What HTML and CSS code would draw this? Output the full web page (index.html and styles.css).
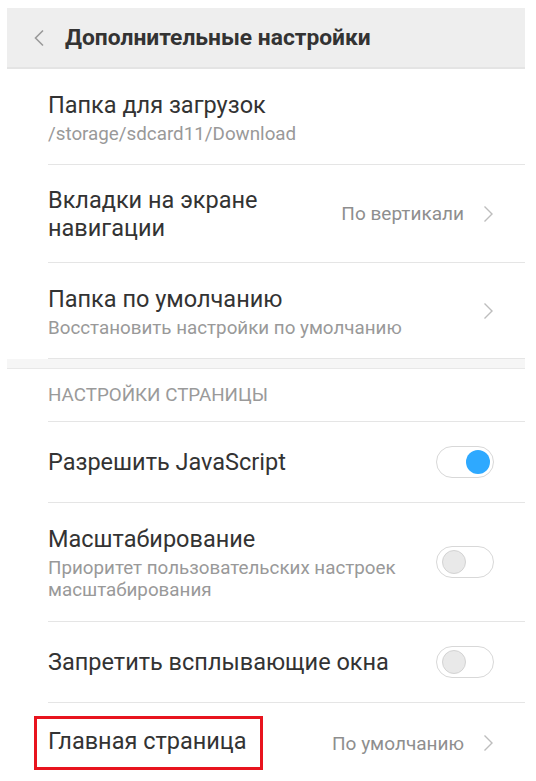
FILE: index.html
```html
<!DOCTYPE html>
<html lang="ru">
<head>
<meta charset="utf-8">
<title>Дополнительные настройки</title>
<link rel="stylesheet" href="styles.css">
</head>
<body>
<div class="screen">
  <header class="topbar">
    <svg class="back" width="12" height="18" viewBox="0 0 12 18"><path d="M10 1.5 L2.5 9 L10 16.5" fill="none" stroke="#9a9a9a" stroke-width="1.6"/></svg>
    <h1 class="topbar-title">Дополнительные настройки</h1>
  </header>

  <div class="row row-tall">
    <div class="text">
      <div class="title">Папка для загрузок</div>
      <div class="sub">/storage/sdcard11/Download</div>
    </div>
  </div>

  <div class="row row-tabs">
    <div class="text">
      <div class="title">Вкладки на экране<br>навигации</div>
    </div>
    <div class="value">По вертикали</div>
    <svg class="chev" width="11" height="18" viewBox="0 0 11 18"><path d="M1.5 1.5 L9 9 L1.5 16.5" fill="none" stroke="#bdbdbd" stroke-width="1.4"/></svg>
  </div>

  <div class="row row-tall">
    <div class="text">
      <div class="title">Папка по умолчанию</div>
      <div class="sub">Восстановить настройки по умолчанию</div>
    </div>
    <svg class="chev" width="11" height="18" viewBox="0 0 11 18"><path d="M1.5 1.5 L9 9 L1.5 16.5" fill="none" stroke="#bdbdbd" stroke-width="1.4"/></svg>
  </div>

  <div class="band"></div>

  <div class="section">НАСТРОЙКИ СТРАНИЦЫ</div>

  <div class="row">
    <div class="text"><div class="title">Разрешить JavaScript</div></div>
    <div class="toggle on"><span class="knob"></span></div>
  </div>

  <div class="row row-zoom">
    <div class="text">
      <div class="title">Масштабирование</div>
      <div class="sub">Приоритет пользовательских настроек<br>масштабирования</div>
    </div>
    <div class="toggle"><span class="knob"></span></div>
  </div>

  <div class="row">
    <div class="text"><div class="title">Запретить всплывающие окна</div></div>
    <div class="toggle"><span class="knob"></span></div>
  </div>

  <div class="row row-home">
    <div class="text"><div class="title"><span class="mark">Главная страница</span></div></div>
    <div class="value">По умолчанию</div>
    <svg class="chev" width="11" height="18" viewBox="0 0 11 18"><path d="M1.5 1.5 L9 9 L1.5 16.5" fill="none" stroke="#bdbdbd" stroke-width="1.4"/></svg>
  </div>
</div>
</body>
</html>
```

FILE: styles.css
```css
html, body {
  margin: 0;
  padding: 0;
  background: #ffffff;
}
body {
  padding: 8px 11px 0 7px;
  font-family: Roboto, "Noto Sans", sans-serif;
  color: #333333;
  overflow: hidden;
  height: 781px;
  box-sizing: border-box;
}
.screen {
  display: flex;
  flex-direction: column;
}
.topbar {
  height: 59px;
  background: #eeeeee;
  border-bottom: 2px solid #e4e4e4;
  display: flex;
  align-items: center;
  padding-left: 26px;
  gap: 20px;
}
.back {
  display: block;
  margin-top: 1px;
}
.topbar-title {
  margin: 0;
  font-size: 22.8px;
  font-weight: 700;
  color: #333333;
}
.row {
  margin-left: 41px;
  padding-right: 31px;
  min-height: 80px;
  border-bottom: 1px solid #e5e5e5;
  display: flex;
  align-items: center;
}
.row-tall {
  min-height: 95px;
}
.row-tabs {
  min-height: 97px;
}
.row-zoom {
  min-height: 118px;
}
.text {
  flex: 1;
}
.title {
  font-size: 23.5px;
  line-height: 28px;
  color: #333333;
}
.row-tall .title,
.row-zoom .title {
  margin-top: 2px;
}
.sub {
  font-size: 18.8px;
  line-height: 22px;
  color: #999999;
  margin-top: 4px;
}
.value {
  font-size: 19px;
  color: #8e8e8e;
  margin-right: 19px;
}
.chev {
  display: block;
}
.band {
  height: 9px;
  background: #f6f6f6;
  border-bottom: 1px solid #e8e8e8;
}
.section {
  margin-left: 41px;
  height: 52px;
  border-bottom: 1px solid #e5e5e5;
  display: flex;
  align-items: center;
  font-size: 18.8px;
  color: #9a9a9a;
}
.toggle {
  box-sizing: border-box;
  width: 58px;
  height: 32px;
  border: 1px solid #d8d8d8;
  border-radius: 16px;
  display: flex;
  align-items: center;
  padding: 0 3px 0 5px;
}
.knob {
  box-sizing: border-box;
  width: 24px;
  height: 24px;
  border-radius: 50%;
  background: #e9e9e9;
  border: 1px solid #d3d3d3;
}
.toggle.on {
  justify-content: flex-end;
}
.toggle.on .knob {
  border: none;
  background: #2ea9ff;
}
.row-home {
  border-bottom: none;
}
.mark {
  display: inline-block;
  border: 3px solid #e8141e;
  padding: 8px 13px 12px 11px;
  margin-left: -14px;
}
```
